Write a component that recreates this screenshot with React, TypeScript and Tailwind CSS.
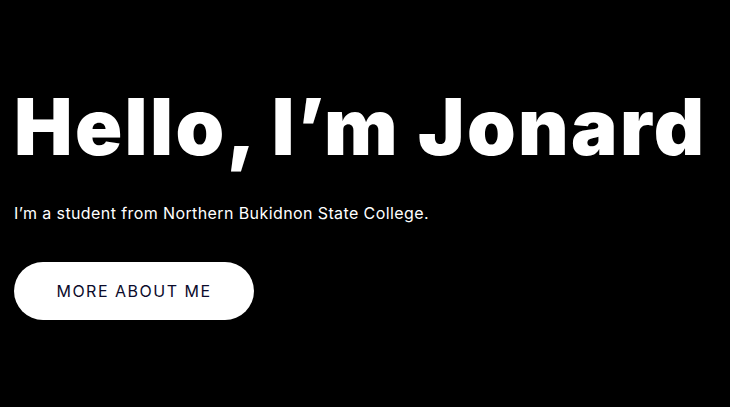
export default function App() {
  return (
    <div className="min-h-[407px] w-full bg-black text-white font-['Inter',sans-serif]">
      <section className="flex flex-col items-start px-[14px] pt-[84px]">
        <h1 className="text-[78px] font-black leading-[1.1] tracking-[2.4px]">
          Hello, I’m Jonard
        </h1>
        <p className="mt-[31px] text-[16px] leading-6 tracking-[0.4px]">
          I’m a student from Northern Bukidnon State College.
        </p>
        <button className="mt-[37px] flex h-[58px] w-[240px] items-center justify-center rounded-full bg-white text-[16px] tracking-[1.5px] text-[#0b0b2b]">
          MORE ABOUT ME
        </button>
      </section>
    </div>
  );
}
